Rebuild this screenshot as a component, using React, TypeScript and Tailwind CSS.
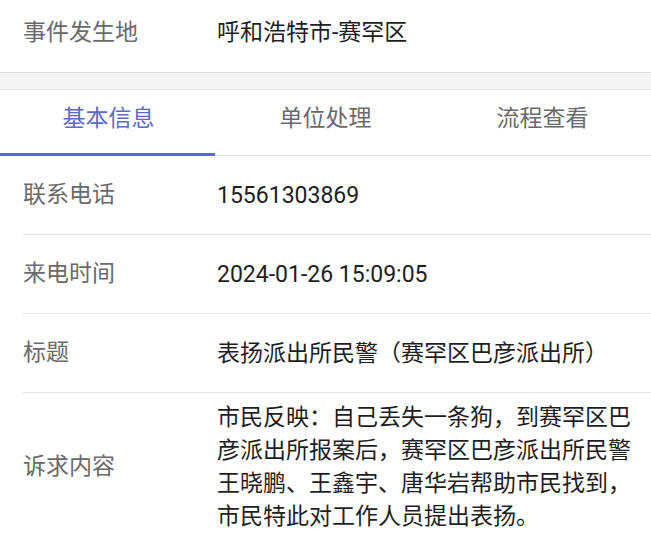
import React from "react";

const font = { fontFamily: 'Roboto, "Noto Sans CJK SC", "Noto Sans", sans-serif' };

function Row({ label, children, last }: { label: string; children: React.ReactNode; last?: boolean }) {
  return (
    <div
      className={`ml-[23px] flex items-center ${last ? "pt-[8px] pb-[8px]" : "h-[79px] border-b border-[#e4e4e4]"}`}
    >
      <div className="w-[194px] shrink-0 text-[23px] text-[#6a6a6a]">{label}</div>
      <div className="flex-1 pr-[16px] text-[23px] leading-[33px] text-[#1e1e1e]">{children}</div>
    </div>
  );
}

export default function App() {
  return (
    <div className="w-[651px] h-[540px] overflow-hidden bg-white" style={font}>
      <div className="flex h-[72px] items-center pb-[6px] pl-[23px]">
        <div className="w-[194px] shrink-0 text-[23px] text-[#6a6a6a]">事件发生地</div>
        <div className="text-[23px] text-[#1e1e1e]">呼和浩特市-赛罕区</div>
      </div>
      <div className="h-[18px] border-t border-b border-t-[#dcdcdc] border-b-[#e6e6e6] bg-[#f4f4f4]" />
      <div className="grid h-[66px] grid-cols-3 border-b border-[#e4e4e4]">
        <div className="relative flex items-center justify-center pb-[6px] text-[23px] text-[#5c6bc0]">
          基本信息
          <div className="absolute bottom-[-1px] left-0 h-[3px] w-[215px] bg-[#5c6bc0]" />
        </div>
        <div className="flex items-center justify-center pb-[6px] text-[23px] text-[#6a6a6a]">单位处理</div>
        <div className="flex items-center justify-center pb-[6px] text-[23px] text-[#6a6a6a]">流程查看</div>
      </div>
      <Row label="联系电话">15561303869</Row>
      <Row label="来电时间">2024-01-26 15:09:05</Row>
      <Row label="标题">表扬派出所民警（赛罕区巴彦派出所）</Row>
      <Row label="诉求内容" last>
        市民反映：自己丢失一条狗，到赛罕区巴彦派出所报案后，赛罕区巴彦派出所民警王晓鹏、王鑫宇、唐华岩帮助市民找到，市民特此对工作人员提出表扬。
      </Row>
    </div>
  );
}
